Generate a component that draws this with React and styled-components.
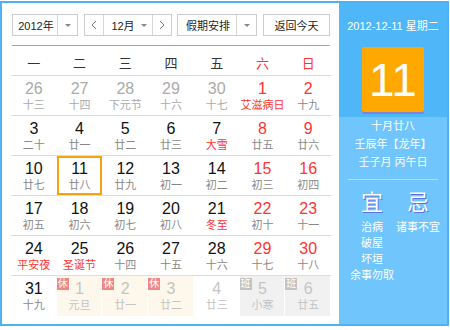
import styled, { createGlobalStyle, css } from "styled-components";

const GlobalStyle = createGlobalStyle`
  body {
    margin: 0;
    background: #fff;
    font-family: "Liberation Sans", "Noto Sans CJK SC", sans-serif;
  }
`;

const weekdays = [
  { label: "一" },
  { label: "二" },
  { label: "三" },
  { label: "四" },
  { label: "五" },
  { label: "六", weekend: true },
  { label: "日", weekend: true },
];

// kind: other (prev month), next (next month), rest (休), work (班)
const rows = [
  [
    { d: 26, l: "十三", kind: "other" },
    { d: 27, l: "十四", kind: "other" },
    { d: 28, l: "下元节", kind: "other" },
    { d: 29, l: "十六", kind: "other" },
    { d: 30, l: "十七", kind: "other" },
    { d: 1, l: "艾滋病日", fest: true },
    { d: 2, l: "十九" },
  ],
  [
    { d: 3, l: "二十" },
    { d: 4, l: "廿一" },
    { d: 5, l: "廿二" },
    { d: 6, l: "廿三" },
    { d: 7, l: "大雪", fest: true },
    { d: 8, l: "廿五" },
    { d: 9, l: "廿六" },
  ],
  [
    { d: 10, l: "廿七" },
    { d: 11, l: "廿八", today: true },
    { d: 12, l: "廿九" },
    { d: 13, l: "初一" },
    { d: 14, l: "初二" },
    { d: 15, l: "初三" },
    { d: 16, l: "初四" },
  ],
  [
    { d: 17, l: "初五" },
    { d: 18, l: "初六" },
    { d: 19, l: "初七" },
    { d: 20, l: "初八" },
    { d: 21, l: "冬至", fest: true },
    { d: 22, l: "初十" },
    { d: 23, l: "十一" },
  ],
  [
    { d: 24, l: "平安夜", fest: true },
    { d: 25, l: "圣诞节", fest: true },
    { d: 26, l: "十四" },
    { d: 27, l: "十五" },
    { d: 28, l: "十六" },
    { d: 29, l: "十七" },
    { d: 30, l: "十八" },
  ],
  [
    { d: 31, l: "十九" },
    { d: 1, l: "元旦", kind: "rest" },
    { d: 2, l: "廿一", kind: "rest" },
    { d: 3, l: "廿二", kind: "rest" },
    { d: 4, l: "廿三", kind: "next" },
    { d: 5, l: "小寒", kind: "work" },
    { d: 6, l: "廿五", kind: "work" },
  ],
];

const good = ["治病", "破屋", "坏垣", "余事勿取"];
const bad = ["诸事不宜"];

function Chevron({ dir }) {
  return (
    <svg width="6" height="10" viewBox="0 0 6 10">
      <polyline
        points={dir === "left" ? "5,1 1,5 5,9" : "1,1 5,5 1,9"}
        fill="none"
        stroke="#777"
        strokeWidth="1"
      />
    </svg>
  );
}

export default function App() {
  return (
    <>
      <GlobalStyle />
      <Frame>
        <Main>
          <Toolbar>
            <Select>
              <SelectText $w={45}>2012年</SelectText>
              <ArrowCell>
                <Caret />
              </ArrowCell>
            </Select>
            <Select>
              <NavCell>
                <Chevron dir="left" />
              </NavCell>
              <MonthCell>
                12月
                <Caret />
              </MonthCell>
              <NavCell>
                <Chevron dir="right" />
              </NavCell>
            </Select>
            <Select>
              <SelectText $w={59}>假期安排</SelectText>
              <ArrowCell>
                <Caret />
              </ArrowCell>
            </Select>
            <TodayButton>返回今天</TodayButton>
          </Toolbar>
          <WeekHeader>
            {weekdays.map((w) => (
              <WeekDay key={w.label} $weekend={w.weekend}>
                {w.label}
              </WeekDay>
            ))}
          </WeekHeader>
          <Grid>
            {rows.map((row, ri) =>
              row.map((c, ci) => (
                <Cell
                  key={`${ri}-${ci}`}
                  $last={ri === rows.length - 1}
                  $kind={c.kind}
                  $today={c.today}
                >
                  {c.kind === "rest" && <Badge $tone="rest">休</Badge>}
                  {c.kind === "work" && <Badge $tone="work">班</Badge>}
                  <DayNum $kind={c.kind} $weekend={ci >= 5}>
                    {c.d}
                  </DayNum>
                  <Lunar $kind={c.kind} $fest={c.fest}>
                    {c.l}
                  </Lunar>
                </Cell>
              ))
            )}
          </Grid>
        </Main>
        <Side>
          <SideTop>
            <DateLine>2012-12-11 星期二</DateLine>
            <BigDay>11</BigDay>
          </SideTop>
          <SideBottom>
            <InfoLine>十月廿八</InfoLine>
            <InfoLine>壬辰年【龙年】</InfoLine>
            <InfoLine>壬子月 丙午日</InfoLine>
            <Divider />
            <Advice>
              <AdviceCol>
                <AdviceHead>宜</AdviceHead>
                <AdviceList>
                  {good.map((g) => (
                    <span key={g}>{g}</span>
                  ))}
                </AdviceList>
              </AdviceCol>
              <AdviceCol>
                <AdviceHead>忌</AdviceHead>
                <AdviceList>
                  {bad.map((g) => (
                    <span key={g}>{g}</span>
                  ))}
                </AdviceList>
              </AdviceCol>
            </Advice>
          </SideBottom>
        </Side>
      </Frame>
    </>
  );
}

const Frame = styled.div`
  display: flex;
  box-sizing: border-box;
  width: 449px;
  height: 325px;
  margin-top: 1px;
  border: 2px solid #4cb2f4;
  background: #fff;
`;

const Main = styled.div`
  flex: 1;
  padding: 11px 8px 0 9px;
`;

const Toolbar = styled.div`
  display: flex;
  align-items: center;
  margin: 0 1px;
  height: 22px;
  padding-bottom: 9px;
  border-bottom: 1px solid #62b9ee;
  & > div {
    margin-right: 6px;
  }
  & > div:nth-child(2) {
    margin-right: 5px;
  }
`;

const Select = styled.div`
  display: flex;
  box-sizing: border-box;
  height: 22px;
  border: 1px solid #cdcdcd;
  background: #fff;
  font-size: 11px;
  color: #222;
`;

const SelectText = styled.div`
  width: ${(p) => p.$w - 1}px;
  display: flex;
  align-items: center;
  justify-content: center;
  padding-left: 2px;
  box-sizing: border-box;
`;

const ArrowCell = styled.div`
  width: 19px;
  display: flex;
  align-items: center;
  justify-content: center;
  border-left: 1px solid #d6d6d6;
`;

const Caret = styled.span`
  display: inline-block;
  width: 0;
  height: 0;
  border-left: 3px solid transparent;
  border-right: 3px solid transparent;
  border-top: 3px solid #888;
`;

const NavCell = styled.div`
  width: 18px;
  display: flex;
  align-items: center;
  justify-content: center;
`;

const MonthCell = styled.div`
  width: 50px;
  box-sizing: border-box;
  display: flex;
  align-items: center;
  justify-content: center;
  gap: 6px;
  padding-left: 2px;
  border-left: 1px solid #d6d6d6;
  border-right: 1px solid #d6d6d6;
`;

const TodayButton = styled.button`
  margin-left: auto;
  width: 67px;
  height: 22px;
  box-sizing: border-box;
  border: 1px solid #cdcdcd;
  background: #fff;
  padding: 0;
  font-family: inherit;
  font-size: 11px;
  color: #222;
`;

const WeekHeader = styled.div`
  display: grid;
  grid-template-columns: repeat(7, 1fr);
  height: 29px;
  border-bottom: 1px solid #ddd;
`;

const WeekDay = styled.div`
  display: flex;
  align-items: center;
  justify-content: center;
  padding-top: 3px;
  font-size: 13px;
  color: ${(p) => (p.$weekend ? "#f33" : "#333")};
`;

const Grid = styled.div`
  display: grid;
  grid-template-columns: repeat(7, 1fr);
  grid-auto-rows: 40px;
`;

const Cell = styled.div`
  position: relative;
  box-sizing: border-box;
  display: flex;
  flex-direction: column;
  align-items: center;
  padding-top: 4px;
  border-bottom: ${(p) => (p.$last ? "none" : "1px solid #ddd")};
  ${(p) =>
    p.$kind === "rest" &&
    css`
      background: #fdf8eb;
      box-shadow: inset -1px 0 0 #fff;
    `}
  ${(p) =>
    p.$kind === "work" &&
    css`
      background: #f1f1f1;
      box-shadow: inset -1px 0 0 #fff;
    `}
  ${(p) =>
    p.$today &&
    css`
      box-shadow: inset 0 0 0 2px #f6a30f;
    `}
`;

const Badge = styled.span`
  position: absolute;
  top: 2px;
  left: 0;
  width: 12px;
  height: 12px;
  display: flex;
  align-items: center;
  justify-content: center;
  font-size: 10px;
  line-height: 1;
  color: #fff;
  background: ${(p) => (p.$tone === "rest" ? "#f08686" : "#c2c2c2")};
`;

const DayNum = styled.div`
  font-size: 16px;
  line-height: 18px;
  color: ${(p) =>
    p.$kind === "other"
      ? "#aaa"
      : p.$kind
      ? "#c4c4c4"
      : p.$weekend
      ? "#f33"
      : "#111"};
`;

const Lunar = styled.div`
  font-size: 11px;
  line-height: 15px;
  white-space: nowrap;
  color: ${(p) =>
    p.$fest
      ? "#f33"
      : p.$kind === "other"
      ? "#aaa"
      : p.$kind
      ? "#c4c4c4"
      : "#888"};
`;

const Side = styled.div`
  width: 108px;
  display: flex;
  flex-direction: column;
  color: #fff;
`;

const SideTop = styled.div`
  height: 114px;
  background: #4fb7f8;
  display: flex;
  flex-direction: column;
  align-items: center;
`;

const DateLine = styled.div`
  margin-top: 16px;
  font-size: 11px;
  line-height: 14px;
  white-space: nowrap;
`;

const BigDay = styled.div`
  margin-top: 14px;
  width: 62px;
  height: 65px;
  border-radius: 2px;
  background: #fea800;
  box-shadow: 0 2px 0 #7b84d6;
  display: flex;
  align-items: center;
  justify-content: center;
  font-size: 46px;
  line-height: 1;
`;

const SideBottom = styled.div`
  flex: 1;
  background: #70c5fd;
  display: flex;
  flex-direction: column;
  align-items: center;
`;

const InfoLine = styled.div`
  font-size: 11px;
  line-height: 18px;
  white-space: nowrap;
`;

const Divider = styled.div`
  align-self: stretch;
  margin: 8px 9px 0;
  height: 1px;
  background: rgba(255, 255, 255, 0.45);
`;

const Advice = styled.div`
  align-self: stretch;
  display: grid;
  grid-template-columns: 46px 46px;
  padding-left: 10px;
  margin-top: 11px;
`;

const AdviceCol = styled.div`
  display: flex;
  flex-direction: column;
  align-items: center;
`;

const AdviceHead = styled.div`
  font-size: 22px;
  line-height: 24px;
  font-weight: normal;
  text-shadow: 1px 1px 0 #5a72e6;
`;

const AdviceList = styled.div`
  margin-top: 4px;
  display: flex;
  flex-direction: column;
  align-items: center;
  font-size: 11px;
  line-height: 16px;
  white-space: nowrap;
`;
